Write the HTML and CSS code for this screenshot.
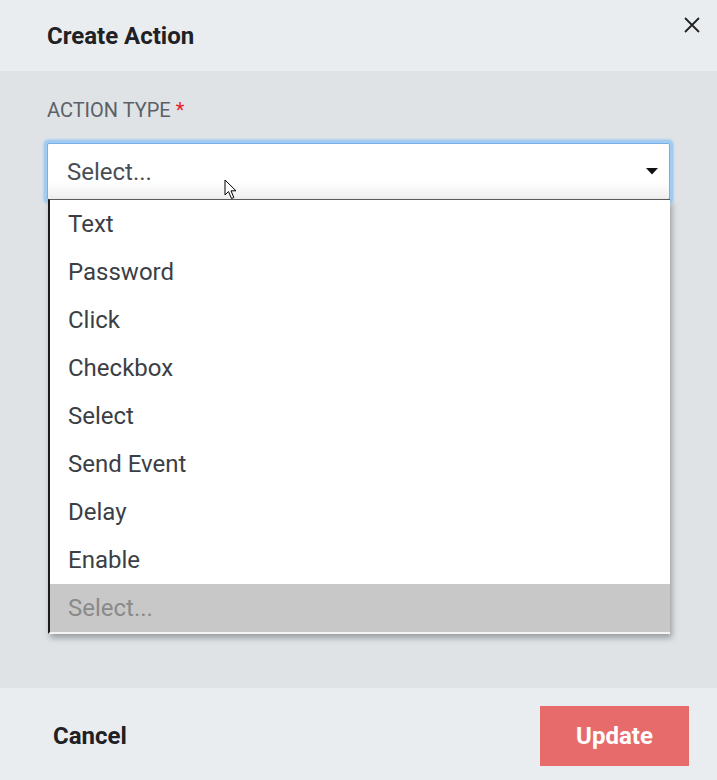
FILE: index.html
```html
<!DOCTYPE html>
<html>
<head>
<meta charset="utf-8">
<link rel="stylesheet" href="styles.css">
</head>
<body>
<div class="modal">
  <header class="modal-header">
    <h1 class="title">Create Action</h1>
    <button class="close" aria-label="Close">
      <svg width="18" height="18" viewBox="0 0 18 18"><path d="M2 2L16 16M16 2L2 16" stroke="#222" stroke-width="1.8" fill="none"/></svg>
    </button>
  </header>
  <main class="modal-body">
    <label class="field-label">ACTION TYPE <span class="req">*</span></label>
    <div class="select-wrap">
      <div class="select">
        <span class="select-value">Select...</span>
        <svg class="caret" width="12" height="7" viewBox="0 0 12 7"><path d="M0 0H12L6 6.5Z" fill="#111"/></svg>
      </div>
      <ul class="listbox">
        <li class="option">Text</li>
        <li class="option">Password</li>
        <li class="option">Click</li>
        <li class="option">Checkbox</li>
        <li class="option">Select</li>
        <li class="option">Send Event</li>
        <li class="option">Delay</li>
        <li class="option">Enable</li>
        <li class="option placeholder">Select...</li>
      </ul>
      <svg class="cursor" width="14" height="21" viewBox="0 0 14 21"><path d="M1 1V16L4.5 12.5L7.5 19.5L9.8 18.5L7 11.8H12Z" fill="#fff" stroke="#000" stroke-width="1" stroke-linejoin="miter"/></svg>
    </div>
  </main>
  <footer class="modal-footer">
    <button class="btn-cancel">Cancel</button>
    <button class="btn-update">Update</button>
  </footer>
</div>
</body>
</html>
```
FILE: styles.css
```css
* { box-sizing: border-box; }
html, body { margin: 0; padding: 0; }
body {
  font-family: Roboto, "Liberation Sans", sans-serif;
  width: 717px;
  height: 780px;
  overflow: hidden;
}
.modal {
  display: flex;
  flex-direction: column;
  height: 780px;
}
.modal-header {
  height: 71px;
  flex: none;
  background: #e9edf0;
  display: flex;
  justify-content: space-between;
  align-items: center;
  padding: 0 16px 0 47px;
}
.title {
  margin: 0;
  font-size: 24px;
  font-weight: 700;
  color: #1f2124;
}
.close {
  align-self: flex-start;
  margin-top: 16px;
  border: 0;
  background: none;
  padding: 0;
  width: 18px;
  height: 18px;
  cursor: pointer;
}
.modal-body {
  flex: 1;
  background: #dfe3e6;
  padding: 27px 47px 0 47px;
}
.field-label {
  display: block;
  font-size: 20px;
  line-height: 24px;
  color: #5b6067;
}
.req { color: #e8212b; }
.select-wrap {
  position: relative;
  margin-top: 21px;
  width: 623px;
}
.select {
  height: 57px;
  border: 1px solid #78afe9;
  border-radius: 2px;
  background: linear-gradient(#fff 0, #fff 68%, #efefef 100%);
  box-shadow: 0 0 0 3px #a2cbf2, 0 0 2px 4px rgba(162, 203, 242, 0.7);
  display: flex;
  align-items: center;
  justify-content: space-between;
  padding: 0 11px 0 19px;
}
.select-value {
  font-size: 24px;
  color: #4a4f56;
}
.listbox {
  position: absolute;
  left: 1px;
  top: 56px;
  width: 622px;
  margin: 0;
  padding: 0;
  list-style: none;
  background: #fff;
  border-left: 2px solid #1c1c1c;
  border-top: 1px solid #5a5a5a;
  border-bottom: 2px solid #f4f4f4;
  box-shadow: 2px 4px 6px rgba(0, 0, 0, 0.3);
}
.option {
  height: 48px;
  line-height: 48px;
  padding-left: 18px;
  font-size: 24px;
  color: #3b3f45;
}
.option.placeholder {
  background: #c8c8c8;
  color: #8a8a8a;
}
.cursor {
  position: absolute;
  left: 177px;
  top: 36px;
}
.modal-footer {
  height: 92px;
  flex: none;
  background: #e9edf0;
  display: flex;
  justify-content: space-between;
  align-items: center;
  padding: 4px 28px 0 53px;
}
.btn-cancel {
  border: 0;
  background: none;
  padding: 0;
  font-family: inherit;
  font-size: 24px;
  font-weight: 700;
  color: #1f2124;
}
.btn-update {
  width: 149px;
  height: 60px;
  border: 0;
  background: #e86b6b;
  color: #fff;
  font-family: inherit;
  font-size: 24px;
  font-weight: 700;
}
```
